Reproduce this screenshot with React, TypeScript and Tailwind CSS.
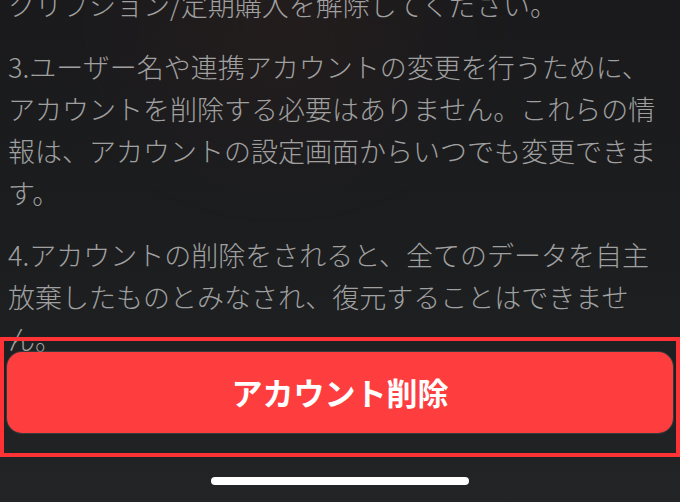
const paragraphs = [
  "3.ユーザー名や連携アカウントの変更を行うために、アカウントを削除する必要はありません。これらの情報は、アカウントの設定画面からいつでも変更できます。",
  "4.アカウントの削除をされると、全てのデータを自主放棄したものとみなされ、復元することはできません。",
];

export default function App() {
  return (
    <div
      className="relative flex h-[502px] w-[680px] flex-col overflow-hidden bg-[linear-gradient(180deg,#1a1a1c_0%,#1c1d1f_50%,#222426_100%)]"
      style={{ fontFamily: '"Noto Sans CJK JP", "Noto Sans", sans-serif' }}
    >
      <div className="pointer-events-none absolute left-[150px] top-[-80px] h-[200px] w-[260px] rounded-full bg-[#3a2420] opacity-30 blur-3xl" />

      <div className="relative h-[341px] shrink-0 pl-[8px] pr-[12px] text-[27px] font-light leading-[42px] text-[#a0a0a0]">
        <p className="mt-[-16px]">クリプション/定期購入を解除してください。</p>
        {paragraphs.map((text) => (
          <p key={text} className="mt-[20px]">
            {text}
          </p>
        ))}
      </div>

      <div className="relative pb-[19px] pl-[7px] pr-[7px] pt-[11px]">
        <button className="flex h-[81px] w-full items-center justify-center rounded-[15px] bg-[#fe3d3f] text-[31px] font-bold text-white shadow-[0_0_0_1px_rgba(80,80,80,0.5)]">
          アカウント削除
        </button>
        <div className="pointer-events-none absolute inset-x-0 bottom-[-5px] top-[-4px] border-[4px] border-[#ff3236]" />
      </div>

      <div className="flex flex-1 items-start justify-center pt-[25px]">
        <div className="h-[8px] w-[258px] rounded-full bg-white" />
      </div>
    </div>
  );
}
